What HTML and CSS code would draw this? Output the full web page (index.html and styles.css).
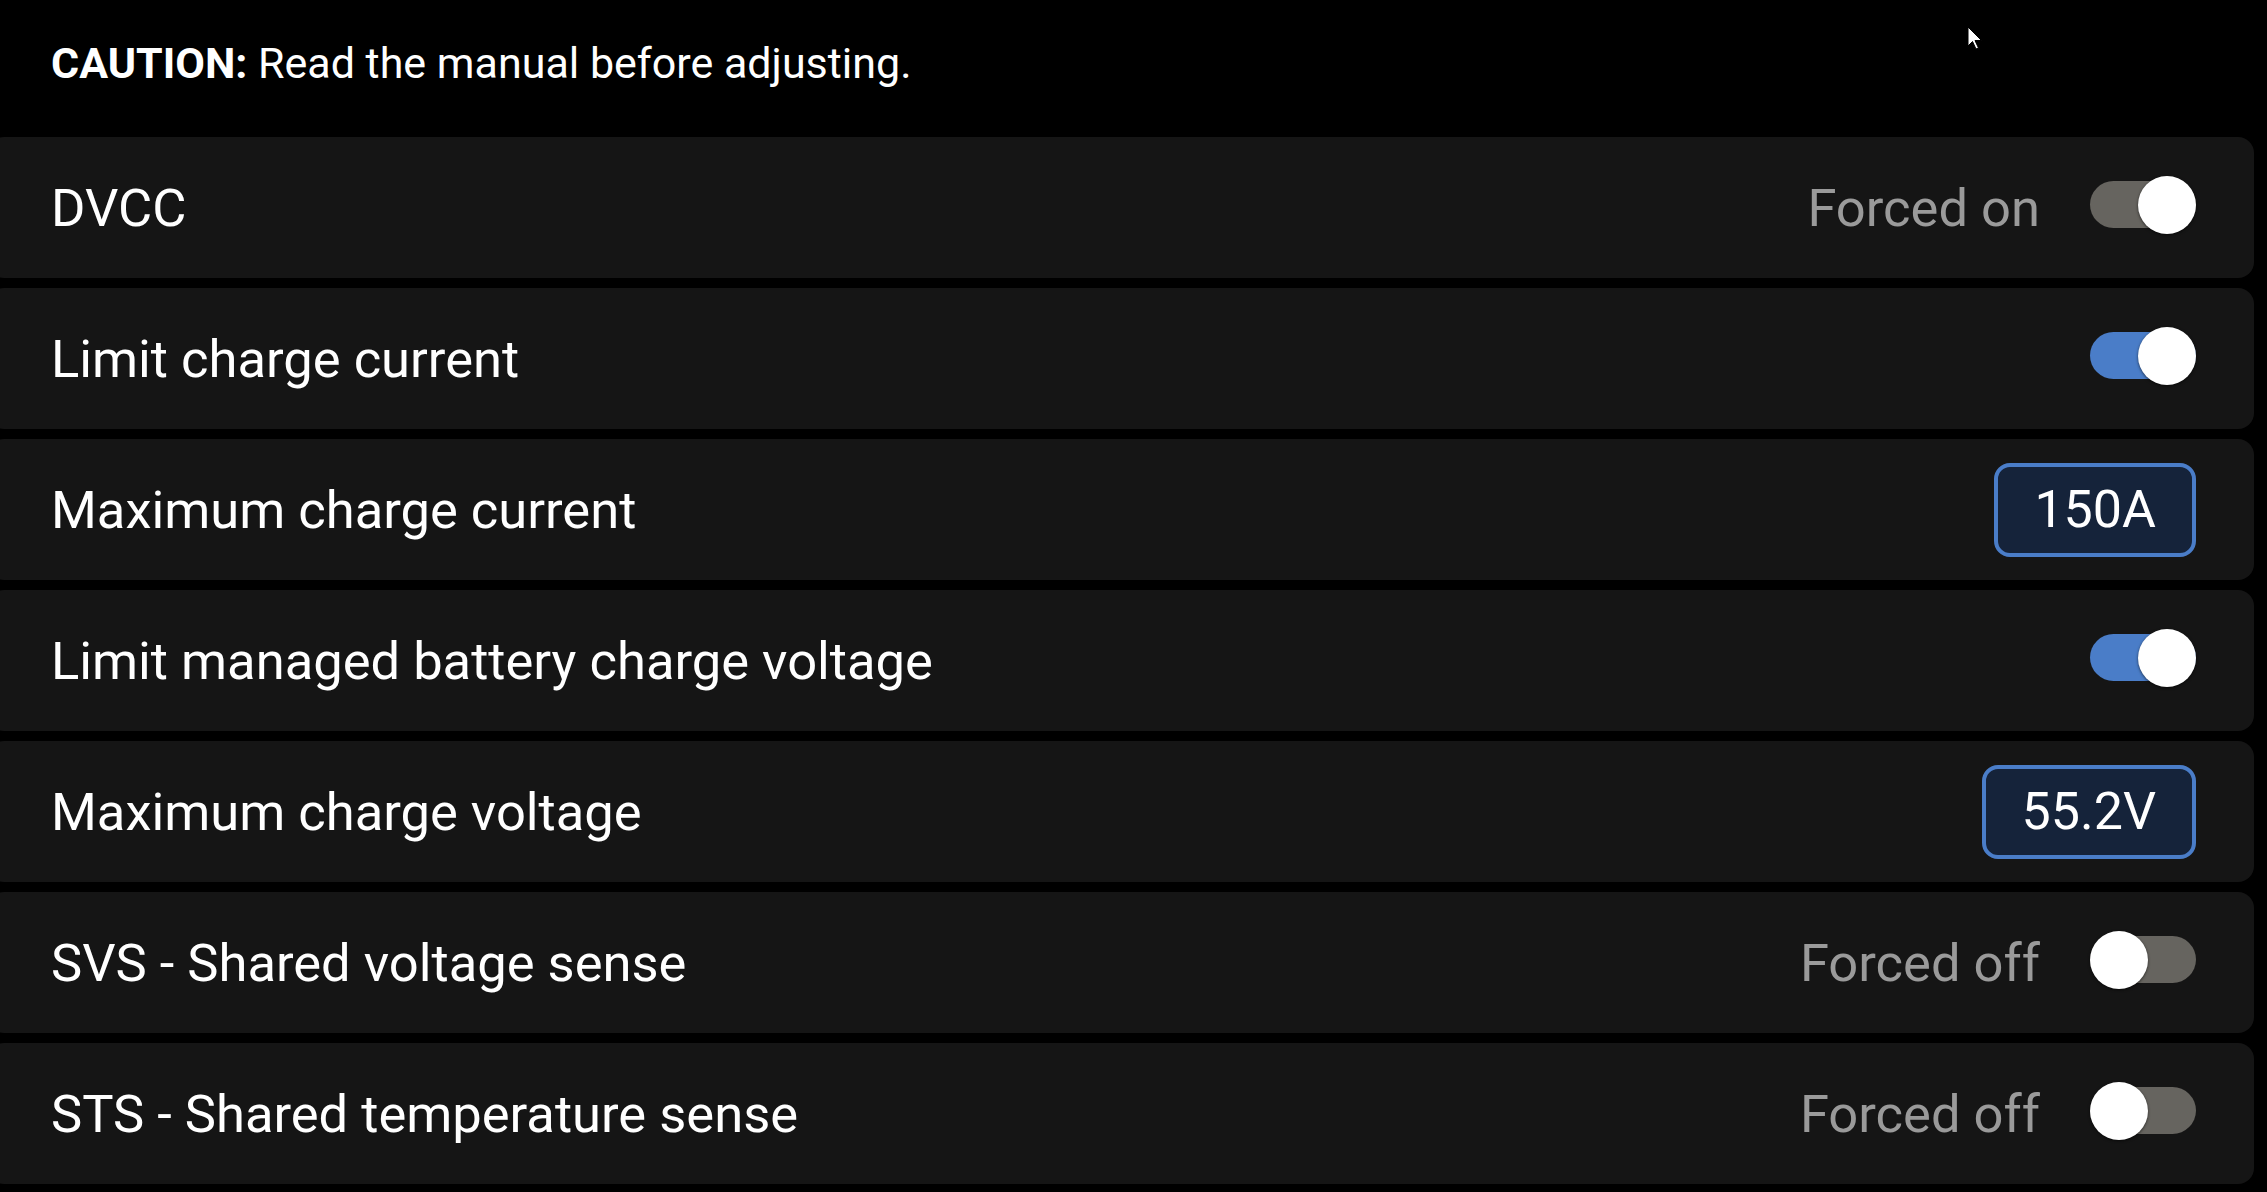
FILE: index.html
```html
<!DOCTYPE html>
<html lang="en">
  <head>
    <meta charset="UTF-8" />
    <title>DVCC</title>
    <link rel="stylesheet" href="styles.css">
  </head>
  <body>
    <div id="dvcc-page">
      <div class="caution"><b>CAUTION:</b> Read the manual before adjusting.</div>
      <div class="settings-list">
        <div class="setting-row">
          <span class="setting-label">DVCC</span>
          <div class="setting-value">
            <span class="forced-text">Forced on</span>
            <span class="toggle forced on"><span class="knob"></span></span>
          </div>
        </div>
        <div class="setting-row">
          <span class="setting-label">Limit charge current</span>
          <div class="setting-value">
            <span class="toggle on"><span class="knob"></span></span>
          </div>
        </div>
        <div class="setting-row">
          <span class="setting-label">Maximum charge current</span>
          <div class="setting-value">
            <span class="value-box">150A</span>
          </div>
        </div>
        <div class="setting-row">
          <span class="setting-label">Limit managed battery charge voltage</span>
          <div class="setting-value">
            <span class="toggle on"><span class="knob"></span></span>
          </div>
        </div>
        <div class="setting-row">
          <span class="setting-label">Maximum charge voltage</span>
          <div class="setting-value">
            <span class="value-box">55.2V</span>
          </div>
        </div>
        <div class="setting-row">
          <span class="setting-label">SVS - Shared voltage sense</span>
          <div class="setting-value">
            <span class="forced-text">Forced off</span>
            <span class="toggle forced"><span class="knob"></span></span>
          </div>
        </div>
        <div class="setting-row">
          <span class="setting-label">STS - Shared temperature sense</span>
          <div class="setting-value">
            <span class="forced-text">Forced off</span>
            <span class="toggle forced"><span class="knob"></span></span>
          </div>
        </div>
      </div>
    </div>

    <svg class="mouse-cursor" width="16" height="24" viewBox="0 0 16 24">
      <path d="M1 1 L1 20 L5.5 15.5 L9 23 L11.5 22 L8 14.5 L14.5 14.5 Z" fill="#fff" stroke="#000" stroke-width="1" />
    </svg>
  </body>
</html>
```

FILE: styles.css
```css
body {
  background: #000;
  margin: 0;
  font-family: Roboto, "Liberation Sans", sans-serif;
  color: #fff;
  overflow: hidden;
}
#dvcc-page {
  display: flex;
  flex-direction: column;
  gap: 10px;
}
.caution {
  height: 127px;
  box-sizing: border-box;
  padding: 41px 0 0 51px;
  font-size: 43px;
  line-height: 44px;
}
.caution b {
  font-weight: 700;
}
.settings-list {
  display: flex;
  flex-direction: column;
  gap: 10px;
  margin: 0 13px 0 -12px;
}
.setting-row {
  height: 141px;
  background: #151515;
  border-radius: 16px;
  display: flex;
  align-items: center;
  justify-content: space-between;
  padding: 0 58px 0 63px;
  font-size: 52.5px;
}
.setting-label {
  color: #fff;
}
.setting-value {
  display: flex;
  align-items: center;
  gap: 50px;
}
.forced-text {
  color: #9a9a9a;
}
.toggle {
  width: 106px;
  height: 47px;
  border-radius: 24px;
  background: #66645f;
  display: flex;
  align-items: center;
  justify-content: flex-start;
  margin-bottom: 6px;
}
.toggle.on {
  justify-content: flex-end;
  background: #4a7dc8;
}
.toggle.forced.on {
  background: #66645f;
}
.knob {
  width: 58px;
  height: 58px;
  flex-shrink: 0;
  border-radius: 50%;
  background: #fff;
  box-shadow: 0 1px 3px rgba(0, 0, 0, 0.6);
}
.value-box {
  border: 4px solid #4a7dc8;
  border-radius: 16px;
  background: #15233a;
  color: #fff;
  height: 86px;
  display: flex;
  align-items: center;
  padding: 0 36px;
  font-size: 52px;
}
.mouse-cursor {
  position: absolute;
  left: 1967px;
  top: 26px;
}
```
